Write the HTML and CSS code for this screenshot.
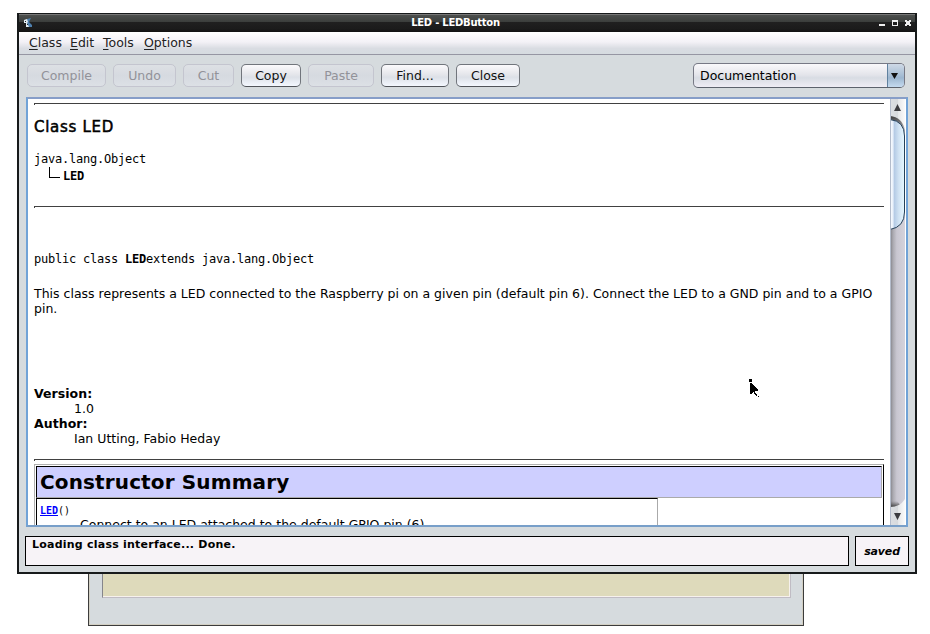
FILE: index.html
```html
<!DOCTYPE html>
<html lang="en">
<head>
<meta charset="utf-8">
<title>LED - LEDButton</title>
<link rel="stylesheet" href="styles.css">
</head>
<body>
<div class="desktop">
  <div class="back-window"><div class="back-canvas"></div></div>
  <main class="window">
    <header class="titlebar">
      <svg class="app-icon" width="10" height="10" viewBox="0 0 10 10"><path d="M4 1 8 0 6 4 9 7 9 9 3 9Z" fill="#4d7fae"/><path d="M1 2 4 1 5 4 4 5 6 9 3 9 3 5 1 5Z" fill="#e5eef2"/><path d="M2 3h1v1H2zM4 6h1v1H4z" fill="#18252b"/></svg>
      <h1 class="window-title">LED - LEDButton</h1>
      <svg class="controls" width="32" height="8" viewBox="0 0 32 8" shape-rendering="crispEdges"><path d="M-1 5h6v2h-6z" fill="#eee"/><path d="M12 1h6v6h-6zM13 3v3h4V3z" fill="#eee" fill-rule="evenodd"/><path d="M25 1h2v1h2V1h2v2h-1v2h1v2h-2V6h-2v1h-2V5h1V3h-1z" fill="#eee"/></svg>
    </header>
    <nav class="menubar"><span class="menu m1"><u>C</u>lass</span><span class="menu m2"><u>E</u>dit</span><span class="menu m3"><u>T</u>ools</span><span class="menu m4"><u>O</u>ptions</span></nav>
    <div class="toolbar">
      <button class="btn w79" disabled><span>Compile</span></button>
      <button class="btn w63" disabled><span>Undo</span></button>
      <button class="btn w51" disabled><span>Cut</span></button>
      <button class="btn w60"><span>Copy</span></button>
      <button class="btn w66" disabled><span>Paste</span></button>
      <button class="btn w68"><span>Find...</span></button>
      <button class="btn w64"><span>Close</span></button>
      <div class="select"><span class="select-label">Documentation</span><span class="select-arrow"><svg width="7" height="6" viewBox="0 0 7 6"><path d="M0 0h7L3.5 6z" fill="#111"/></svg></span></div>
    </div>
    <section class="viewer">
      <article class="doc">
        <hr>
        <h2 class="class-name">Class LED</h2>
        <div class="tree mono">java.lang.Object</div>
        <div class="tree-child mono"><i class="elbow"></i><b>LED</b></div>
        <hr>
        <div class="signature mono">public class <b>LED</b>extends java.lang.Object</div>
        <p class="description"><span class="desc-line">This class represents a LED connected to the Raspberry pi on a given pin (default pin 6). Connect the LED to a GND pin and to a GPIO</span><br>pin.</p>
        <dl class="meta"><dt>Version:</dt><dd>1.0</dd><dt>Author:</dt><dd class="authors">Ian Utting, Fabio Heday</dd></dl>
        <hr>
        <div class="summary">
          <h2 class="summary-title"><span>Constructor Summary</span></h2>
          <div class="summary-cell"><div class="ctor mono"><a>LED</a>()</div><div class="ctor-text"><span>Connect to an LED attached to the default GPIO pin (6)</span></div></div>
        </div>
      </article>
      <div class="scrollbar">
        <svg width="15" height="426" viewBox="0 0 15 426">
          <defs>
            <linearGradient id="track"><stop offset="0" stop-color="#7d7d83"/><stop offset=".2" stop-color="#aaa9b0"/><stop offset=".45" stop-color="#c8c6d0"/><stop offset="1" stop-color="#d5d3dc"/></linearGradient>
            <linearGradient id="cap"><stop offset="0" stop-color="#dcdfe3"/><stop offset=".5" stop-color="#d7dadd"/><stop offset=".55" stop-color="#e5e7e9"/><stop offset="1" stop-color="#fafafa"/></linearGradient>
            <linearGradient id="thumb"><stop offset="0" stop-color="#fff"/><stop offset=".22" stop-color="#e5eefa"/><stop offset=".28" stop-color="#b3c9e4"/><stop offset=".6" stop-color="#d0e2f3"/><stop offset="1" stop-color="#e5f7ff"/></linearGradient>
            <linearGradient id="shade" x2="0" y2="1"><stop offset="0" stop-color="#333" stop-opacity=".9"/><stop offset="1" stop-color="#555" stop-opacity="0"/></linearGradient>
          </defs>
          <path d="M0 0h15v426H0z" fill="url(#track)"/>
          <path d="M0 0h15v32Q12 19 0 17z" fill="url(#cap)"/>
          <path d="M0 17Q12 18 15 31V36H0z" fill="url(#shade)"/>
          <path d="M0 20.5Q14.500 22 14.500 37V113Q14.500 128 0 130.500z" fill="url(#thumb)"/>
          <path d="M0 20.500Q14.500 22 14.500 37V113Q14.500 128 0 130.500" fill="none" stroke="#253f57"/>
          <path d="M0 402h12L7 408H0z" fill="url(#shade)" transform="matrix(1 0 0 -1 0 810)"/>
          <path d="M0 408Q10 408 15 400V426H0z" fill="url(#cap)"/>
          <path d="M.5 0V426" stroke="#b4bccb"/>
          <path d="M4 12 7.500 5 11 12zM4 414h7l-3.500 7z" fill="#3c3c40"/>
        </svg>
      </div>
    </section>
    <footer class="statusbar"><div class="message"><span>Loading class interface... Done.</span></div><div class="state"><span>saved</span></div></footer>
  </main>
  <svg class="pointer" width="10" height="19" viewBox="0 0 10 19" shape-rendering="crispEdges"><path d="M0 0h3v3H0zM1 4h1l7 7v1H6l1 3h1v2H7l-1-1-1-3H4l-2 2H1z"/><path d="M9 17h1v1H9z"/></svg>
</div>
</body>
</html>
```
FILE: styles.css
```css
* { box-sizing: border-box; }
body { margin: 0; background: #fff; color: #000; font-family: "DejaVu Sans", sans-serif; font-size: 12.5px; }
h1, h2, p, dl, dd { margin: 0; }
svg { display: block; }
.desktop { position: relative; width: 930px; height: 634px; overflow: hidden; }
.back-window { position: absolute; left: 88px; top: 500px; width: 716px; height: 126px; padding: 0 12px 27px 13px; border: 1px solid #3c3c3c; background: #d6dbde; box-shadow: inset 0 0 0 1px #d2cfc3; }
.back-canvas { height: 97px; border: 1px solid #c0bcc4; border-left-color: #85858b; background: #dedabb; box-shadow: inset -1px -1px #f6f1ed; }
.window { position: absolute; left: 17px; top: 13px; width: 900px; height: 561px; border: 2px solid #171a1b; border-top-width: 1px; background: #d6dbde; display: flex; flex-direction: column; }
.titlebar { flex: 0 0 18px; display: flex; align-items: center; padding: 0 3px 0 4px; background: linear-gradient(#777 0 1px, #4c4f4d 1px, #3b3e3c 8px, #202020 8px, #1b1b1b 15px, #111 18px); color: #fff; }
.window-title { flex: 1; padding-right: 2px; font-size: 10px; line-height: 16px; text-align: center; letter-spacing: -.25px; }
.controls { overflow: visible; }
.menubar { flex: 0 0 23px; display: flex; padding-left: 10px; border-bottom: 1px solid #9696a3; background: linear-gradient(#fff, #f3f1f6 45%, #d9dce2 75%, #d6dbe0); line-height: 22px; color: #222; }
.menu u { text-underline-offset: 2px; }
.m1 { width: 41px; } .m2 { width: 33px; } .m3 { width: 41px; }
.toolbar { flex: 0 0 42px; display: flex; align-items: center; gap: 7px; padding: 0 10px 1px 8px; }
.btn { height: 23px; padding: 0; font: 12.5px/21px "DejaVu Sans", sans-serif; color: #111; border: 1px solid #71757c; border-bottom-color: #51545a; border-radius: 5px; background: linear-gradient(#fbfafc, #e5e6eb 45%, #dce0e7 58%, #f4f8ff); }
.btn:disabled { color: #929299; border-color: #c4c5cf; background: linear-gradient(#dde0e4, #d6dae0 50%, #dce0e5); }
.w79 { width: 79px; } .w63 { width: 63px; } .w51 { width: 51px; } .w60 { width: 60px; } .w66 { width: 66px; } .w68 { width: 68px; } .w64 { width: 64px; }
.select { display: flex; width: 212px; height: 25px; margin-left: auto; border: 1px solid #777985; border-bottom-color: #5c626c; border-radius: 5px; background: linear-gradient(#faf9fb, #e3e4ea 48%, #d8dce3 60%, #efedf5); overflow: hidden; }
.select-label { flex: 1; padding-left: 6px; line-height: 23px; }
.select-arrow { display: flex; align-items: center; justify-content: center; width: 17px; padding-right: 4px; border-left: 1px solid #60819f; background: linear-gradient(#ced9e6, #a6bdd4 50%, #9cb6cf 60%, #c4daef); }
.viewer { display: flex; flex: 0 0 430px; margin: 0 7px; border: 2px solid #71a3d7; border-top-color: #879ec8; border-bottom-color: #789fc9; background: #fff; }
.doc { width: 862px; height: 426px; padding: 4px 6px 0; overflow: hidden; }
.doc hr { width: 850px; height: 2px; margin: 0 0 -1px; border: 0; background: linear-gradient(#414141, #414141) 0 0 / 100% 1px no-repeat, linear-gradient(#414141, #414141) 0 0 / 1px 2px no-repeat; }
.mono { font-family: "DejaVu Sans Mono", monospace; font-size: 12px; letter-spacing: -.224px; line-height: 17px; }
.class-name { margin-top: 13px; font-size: 15px; font-weight: normal; line-height: 20px; letter-spacing: .7px; -webkit-text-stroke: .5px #000; }
.tree { margin-top: 14px; }
.tree-child { display: flex; padding-left: 15px; height: 17px; margin-bottom: 21px; }
.elbow { width: 11px; height: 11px; margin: -1px 3px 0 0; border: solid #000; border-width: 0 0 1px 1px; }
.signature { margin: 44px 0 18px; }
.description { line-height: 15px; }
.desc-line { white-space: nowrap; letter-spacing: .006px; }
.meta { margin: 70px 0 13px; line-height: 15px; }
.meta dt { font-weight: bold; letter-spacing: .05px; }
.meta dd { margin-left: 40px; }
.summary { width: 850px; height: 80px; margin-top: 4px; padding: 1px 1px 0; border: 1px solid #b0b0b0; border-right-color: #000; border-bottom: 0; }
.summary-title { height: 32px; padding-left: 3px; border: 1px solid #000; border-right-color: #aaa; border-bottom-color: #aaa; background: #cecfff; font-size: 20px; line-height: 30px; letter-spacing: .13px; }
.summary-cell { width: 622px; height: 40px; padding: 5px 0 0 3px; border: 1px solid #000; border-right-color: #aaa; border-bottom: 0; }
.ctor { font-size: 10px; letter-spacing: -.02px; line-height: 14px; }
.ctor a { color: #00f; font-weight: bold; text-decoration: underline; }
.ctor-text { margin: -1px 0 0 40px; line-height: 15px; }
.statusbar { display: flex; justify-content: space-between; margin: 9px 6px 0; height: 30px; font-size: 11px; font-weight: bold; }
.message { width: 824px; padding-left: 6px; border: 1px solid #000; background: #f7f3f7; line-height: 15px; letter-spacing: .23px; }
.state { width: 54px; border: 1px solid #000; background: #f7f3f7; text-align: center; font-style: italic; line-height: 29px; letter-spacing: -.15px; }
.pointer { position: absolute; left: 749px; top: 379px; }
```
